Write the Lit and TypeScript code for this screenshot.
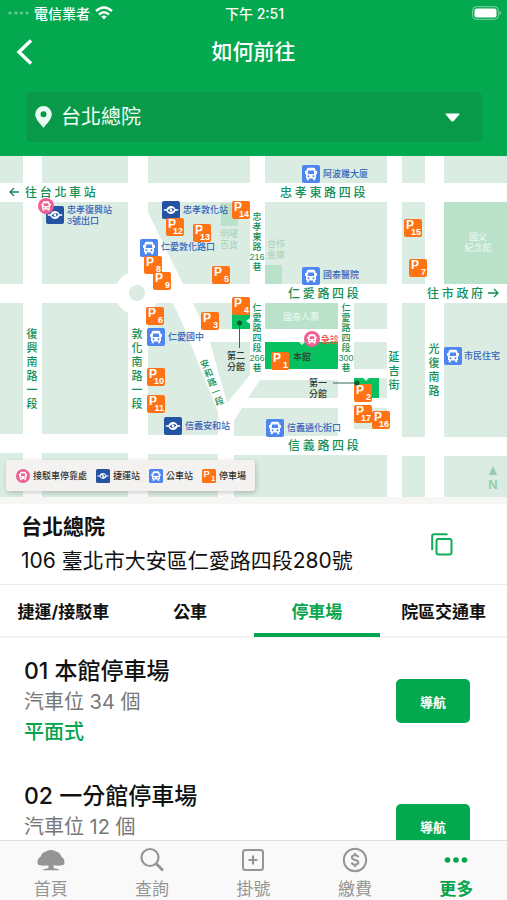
import { LitElement, html, svg, css, nothing } from "lit";
import { customElement, property, state } from "lit/decorators.js";
import { classMap } from "lit/directives/class-map.js";

type Pin = [label: string, x: number, y: number];
type Label = [text: string, x: number, y: number];
type Column = { x: number; y: number; step: number; size: string; parts: string[]; turn?: number };

/* ---------- map data, in map units ---------- */

const blocks: [number, number, number, number][] = [
  [0, 0, 23, 27], [42, 0, 86, 27], [148, 0, 102, 27], [265, 0, 122, 27], [402, 0, 23, 27], [444, 0, 63, 27],
  [0, 46, 23, 82], [42, 46, 86, 82], [265, 46, 122, 82], [402, 46, 23, 82],
  [0, 147, 23, 131], [42, 147, 86, 131], [354, 147, 33, 26], [354, 186, 33, 27], [354, 222, 33, 20],
  [354, 252, 33, 21], [402, 147, 23, 134], [444, 147, 63, 134],
  [0, 297, 23, 44], [42, 297, 86, 44], [148, 298, 70, 43], [234, 299, 153, 42], [402, 300, 23, 41], [444, 300, 63, 41],
];

const shapes = [
  "148,46 250,46 250,128 183,128 148,56",
  "148,147 173,147 183,169 218,256 218,279 148,279",
  "193,147 250,147 250,173 205,173",
  "210,186 250,186 250,219 227,247",
  "260,224 338,224 338,242 248,242",
  "242,252 338,252 338,280 234,280 234,265",
];

const landmarks: [number, number, number, number][] = [
  [221, 47, 17, 23], [265, 109, 17, 19], [265, 147, 73, 26], [444, 46, 63, 82],
];

const campus: [number, number, number, number][] = [
  [232, 157, 18, 16], [265, 186, 73, 27], [354, 222, 25, 20],
];

const parking: Pin[] = [
  ["14", 232, 45], ["12", 166, 62], ["13", 193, 68], ["8", 144, 100], ["9", 153, 116], ["5", 212, 110],
  ["4", 232, 141], ["6", 146, 151], ["3", 201, 156], ["15", 404, 63], ["7", 409, 103], ["10", 147, 212],
  ["11", 147, 239], ["1", 271, 196], ["2", 354, 228], ["17", 354, 249], ["16", 372, 255],
];

const metro: [number, number][] = [[46, 50], [162, 45], [164, 261]];
const buses: [number, number][] = [[140, 83], [302, 9], [302, 111], [147, 172], [444, 191], [266, 263]];
const shuttles: [number, number][] = [[38, 42], [304, 175]];

const stops: Label[] = [
  ["忠孝復興站", 67, 54], ["3號出口", 67, 65], ["忠孝敦化站", 183, 54], ["仁愛敦化路口", 161, 91],
  ["阿波羅大廈", 323, 18], ["國泰醫院", 323, 119], ["仁愛國中", 168, 181], ["信義安和站", 185, 270],
  ["市民住宅", 464, 200], ["信義通化街口", 287, 272],
];

const roads: Label[] = [
  ["往 台 北 車 站", 25, 35], ["忠 孝 東 路 四 段", 280, 35], ["仁 愛 路 四 段", 288, 136],
  ["往 市 政 府", 427, 136], ["信 義 路 四 段", 288, 288],
];

const columns: Column[] = [
  { x: 32, y: 178, step: 14, size: "avenue", parts: [..."復興南路一段"] },
  { x: 137, y: 178, step: 14, size: "avenue", parts: [..."敦化南路一段"] },
  { x: 394, y: 201, step: 14, size: "avenue", parts: [..."延吉街"] },
  { x: 434, y: 193, step: 14, size: "avenue", parts: [..."光復南路"] },
  { x: 257, y: 61, step: 10, size: "lane", parts: [..."忠孝東路", "216", "巷"] },
  { x: 257, y: 152, step: 10, size: "lane", parts: [..."仁愛路四段", "266", "巷"] },
  { x: 346, y: 152, step: 10, size: "lane", parts: [..."仁愛路四段", "300", "巷"] },
  { x: 205, y: 208, step: 10, size: "lane", parts: [..."安和路一段"], turn: -21 },
];

const faint: [string, number, number, string][] = [
  ["明曜", 229, 78, "sage"], ["百貨", 229, 89, "sage"], ["合作", 276, 88, "sage"], ["金庫", 276, 99, "sage"],
  ["國父", 478, 81, "pale"], ["紀念館", 478, 92, "pale"], ["國泰人壽", 301, 161, "pale"],
];

/* ---------- map symbols, each on an 18 unit square ---------- */

const busGlyph = svg`
  <path fill="#fff" d="M4.6 4.4Q4.800 3 6.400 2.800H11.600Q13.200 3 13.400 4.400L13.700 6H15V9H14V13H13.200V15.200H11.200V13.600H6.800V15.200H4.800V13H4V9H3V6H4.300Z"/>
  <path class="cut" d="M6.200 5.400H11.800L12.300 9H5.700Z"/>
  <circle class="cut" cx="6.500" cy="11.300" r="1"/><circle class="cut" cx="11.500" cy="11.300" r="1"/>`;

const symbols = {
  bus: svg`<g class="bus"><rect width="18" height="18" rx="2"/>${busGlyph}</g>`,
  metro: svg`<g class="metro"><rect width="18" height="18" rx="2"/>
    <path fill="#fff" d="M1.800 8.200H4.400Q6 5 9 5Q12 5 13.600 8.200H16.200V9.800H13.600Q12 13 9 13Q6 13 4.400 9.800H1.800Z"/>
    <path class="cut" d="M5.600 9.500Q7.500 6.800 11 7.200L12.400 8.500Q10.500 11.200 7 10.800Z"/><circle cx="9" cy="9" r="1.300" fill="#fff"/></g>`,
  shuttle: svg`<g class="shuttle"><circle cx="8" cy="8" r="8"/><g transform="translate(1 1) scale(.78)">${busGlyph}</g></g>`,
  parking: (n: string) => svg`<g class="parking"><rect width="18" height="18" rx="2"/>
    <text class="p" x="2" y="10">P</text>
    <text class="n" x="17" y="16" text-anchor="end">${n}</text></g>`,
};

const symbolStyles = css`
  .bus rect, .bus .cut { fill: #4d86ef; }
  .metro rect, .metro .cut { fill: #2453a3; }
  .shuttle > circle, .shuttle .cut { fill: #ee5f93; }
  .parking rect { fill: #ff7315; }
  .parking text { fill: #fff; font-family: "Liberation Sans", sans-serif; font-weight: 700; }
  .parking .p { font-size: 12px; }
  .parking .n { font-size: 9px; }
`;

@customElement("hospital-map")
class HospitalMap extends LitElement {
  static styles = [symbolStyles, css`
    :host { display: block; position: relative; background: #fefffe; }
    .map { display: block; width: 100%; height: auto; }
    text { dominant-baseline: central; font-family: "Liberation Sans", "Noto Sans CJK TC", sans-serif; }
    .parking text { dominant-baseline: auto; }
    .block { fill: #dbece2; }
    .landmark { fill: #bae2cb; }
    .campus { fill: #07c160; }
    .white { fill: #fefffe; }
    .road { font-family: "Noto Sans CJK TC", sans-serif; font-size: 12px; font-weight: 500; fill: #138f57; }
    .avenue { font-size: 11px; font-weight: 500; fill: #138f57; }
    .lane { font-size: 9px; font-weight: 500; fill: #138f57; }
    .column { text-anchor: middle; }
    .stop { font-size: 9px; font-weight: 500; fill: #3763bb; }
    .wing { font-size: 9px; font-weight: 500; fill: #2f3d36; }
    .urgent { font-size: 9px; font-weight: 500; fill: #ee4c3c; }
    .faint { font-size: 9px; text-anchor: middle; }
    .sage { fill: #a9d3ba; }
    .pale { fill: #eefaf2; }
    .arrow { fill: none; stroke: #138f57; stroke-width: 1.3; }
    .leader { stroke: #2c6e4c; stroke-width: 1; }
    .dot { fill: #0b5a31; }
    .entry { fill: #d5f5e2; }
    .north { fill: #93ceae; font-size: 13px; font-weight: 700; text-anchor: middle; }
    .legend {
      position: absolute; left: 6px; bottom: 6px;
      display: flex; align-items: center; gap: 9px;
      height: 31px; margin: 0; padding: 0 9px 0 10px; list-style: none;
      border-radius: 3px; background: #f4f2f1;
      box-shadow: 1px 2px 5px rgba(0, 0, 0, .2);
      font: 500 9px "Noto Sans CJK TC", sans-serif; color: #333;
    }
    .legend li { display: flex; align-items: center; gap: 3px; white-space: nowrap; }
    .key { width: 14px; height: 14px; }
  `];

  private rect(kind: string, [x, y, w, h]: [number, number, number, number]) {
    return svg`<rect class=${kind} x=${x} y=${y} width=${w} height=${h}/>`;
  }

  private place(symbol: unknown, x: number, y: number) {
    return svg`<g transform="translate(${x} ${y})">${symbol}</g>`;
  }

  private column(c: Column) {
    return svg`<g transform="translate(${c.x} ${c.y}) rotate(${c.turn ?? 0})">
      <text class="column ${c.size}">${c.parts.map(
        (part, i) => svg`<tspan x="0" y=${i * c.step}>${part}</tspan>`)}</text></g>`;
  }

  private key(symbol: unknown, name: string, box = "0 0 18 18") {
    return html`<li><svg class="key" viewBox=${box} aria-hidden="true">${symbol}</svg>${name}</li>`;
  }

  render() {
    return html`
      <svg class="map" viewBox="0 0 507 341" role="img" aria-label="台北總院">
        ${blocks.map((b) => this.rect("block", b))}
        ${shapes.map((points) => svg`<polygon class="block" points=${points}/>`)}
        <circle class="white" cx="137" cy="137" r="22"/>
        <circle class="block" cx="137" cy="137" r="8"/>
        ${landmarks.map((b) => this.rect("landmark", b))}
        ${campus.map((b) => this.rect("campus", b))}
        <path class="entry" d="M246 165L250 162V168ZM299 186H305L302 189ZM363 222H369L366 225Z"/>
        ${faint.map(([t, x, y, tone]) => svg`<text class="faint ${tone}" x=${x} y=${y}>${t}</text>`)}
        ${roads.map(([t, x, y]) => svg`<text class="road" x=${x} y=${y}>${t}</text>`)}
        <path class="arrow" d="M19 36H10M14 32L10 36L14 40M488 137H498M494 133L498 137L494 141"/>
        ${columns.map((c) => this.column(c))}
        ${stops.map(([t, x, y]) => svg`<text class="stop" x=${x} y=${y}>${t}</text>`)}
        ${metro.map(([x, y]) => this.place(symbols.metro, x, y))}
        ${buses.map(([x, y]) => this.place(symbols.bus, x, y))}
        ${parking.map(([n, x, y]) => this.place(symbols.parking(n), x, y))}
        ${shuttles.map(([x, y]) => this.place(symbols.shuttle, x, y))}
        <path class="leader" d="M239.500 167V192M333 227H357"/>
        <circle class="dot" cx="239.500" cy="167" r="2.500"/>
        <circle class="dot" cx="357" cy="227" r="2.500"/>
        <text class="wing" x="227" y="200">第二</text>
        <text class="wing" x="227" y="211">分館</text>
        <text class="wing" x="309" y="227">第一</text>
        <text class="wing" x="309" y="238">分館</text>
        <text class="wing" x="293" y="201">本館</text>
        <text class="urgent" x="321" y="184">急診</text>
        <path class="north" d="M493 310L497 319H489Z"/>
        <text class="north" x="493" y="328">N</text>
      </svg>
      <ul class="legend">
        ${this.key(symbols.shuttle, "接駁車停靠處", "0 0 16 16")}
        ${this.key(symbols.metro, "捷運站")}
        ${this.key(symbols.bus, "公車站")}
        ${this.key(symbols.parking("1"), "停車場")}
      </ul>`;
  }
}

/* ---------- bottom navigation ---------- */

const navIcons: Record<string, unknown> = {
  home: svg`<path fill="currentColor" d="M.8 17.300C-.2 13.500 1.500 11 3.800 9.600C4.300 6.500 6.800 4.800 9.500 4.200C12.300 2.700 15.700 2.700 18.500 4.200C21.200 4.800 23.700 6.500 24.200 9.600C26.500 11 28.200 13.500 27.200 17.300C26 18.800 22.500 18.900 16.300 18.600L16.800 21.300C19 21.400 21 21.900 22.500 23.200H5.500C7 21.900 9 21.400 11.200 21.300L11.700 18.600C5.500 18.900 2 18.800.8 17.300Z"/>`,
  search: svg`<g fill="none" stroke="currentColor" stroke-width="2.200"><circle cx="12" cy="10.500" r="8.500"/><path stroke-width="3" d="M18 16.500L25 23.500"/></g>`,
  register: svg`<g fill="none" stroke="currentColor" stroke-width="2"><rect x="4" y="3" width="20" height="20" rx="2.500"/><path stroke-width="2.200" d="M14 8.500V17.500M9.500 13H18.500"/></g>`,
  pay: svg`<g fill="none" stroke="currentColor" stroke-width="2"><circle cx="14" cy="13" r="11.200"/><path d="M17.300 10.300C17 8.900 15.700 8.300 14 8.300C12.200 8.300 10.900 9.100 10.900 10.600C10.900 13.900 17.300 11.900 17.300 15.300C17.300 16.900 15.900 17.700 14 17.700C12.200 17.700 10.900 16.900 10.700 15.500M14 6V8.500M14 17.500V20"/></g>`,
  more: svg`<g fill="currentColor"><circle cx="5.500" cy="13" r="2.800"/><circle cx="14" cy="13" r="2.800"/><circle cx="22.500" cy="13" r="2.800"/></g>`,
};

@customElement("bottom-nav")
class BottomNav extends LitElement {
  static styles = css`
    :host { display: block; background: #f9f9f9; border-top: 1px solid #dedede; }
    .bar { display: grid; grid-template-columns: repeat(5, 1fr); height: 59px; }
    .link {
      display: flex; flex-direction: column; align-items: center; gap: 4px; padding-top: 6px;
      color: #959595; text-decoration: none; font-size: 17px; line-height: 24px;
    }
    .link.on { color: #04a54d; font-weight: 700; }
    .icon { width: 28px; height: 26px; flex: none; }
  `;
  private items = [["home", "首頁"], ["search", "查詢"], ["register", "掛號"], ["pay", "繳費"], ["more", "更多"]];

  render() {
    return html`<nav class="bar">${this.items.map(([id, name]) => html`
      <a href="#${id}" class=${classMap({ link: true, on: id === "more" })}>
        <svg class="icon" viewBox="0 0 28 26" aria-hidden="true">${navIcons[id]}</svg>${name}</a>`)}</nav>`;
  }
}

/* ---------- one car park ---------- */

@customElement("parking-row")
class ParkingRow extends LitElement {
  @property() name = "";
  @property() spaces = "";
  @property() kind = "";

  static styles = css`
    :host { display: flex; justify-content: space-between; align-items: flex-start; min-height: 125px; padding: 0 37px 0 24px; box-sizing: border-box; }
    .name { margin: 0; font-size: 23px; line-height: 32px; font-weight: 500; color: #111; }
    .line { margin: 0; font-size: 20px; line-height: 30px; color: #777; }
    .kind { color: #04a54d; font-weight: 500; }
    .go {
      width: 74px; height: 44px; margin-top: 24px; padding: 0; border: 0; border-radius: 5px;
      background: #04a84e; color: #fff; font: inherit; font-size: 13px; font-weight: 700;
    }
  `;

  render() {
    return html`
      <div>
        <h2 class="name">${this.name}</h2>
        <p class="line">${this.spaces}</p>
        ${this.kind ? html`<p class="line kind">${this.kind}</p>` : nothing}
      </div>
      <button class="go" type="button">導航</button>`;
  }
}

/* ---------- page ---------- */

@customElement("app-root")
class AppRoot extends LitElement {
  @state() private tab = "停車場";

  static styles = css`
    :host {
      display: flex; flex-direction: column; height: 100vh; overflow: hidden;
      background: #fff; color: #111; font-family: Inter, "Noto Sans CJK TC", sans-serif;
    }
    .header { flex: none; padding-bottom: 14px; background: #04a84e; color: #fff; }
    .status {
      display: grid; grid-template-columns: 1fr auto 1fr; align-items: center;
      height: 26px; padding: 0 6px 0 8px; font-size: 14px; font-weight: 500;
    }
    .carrier { display: flex; align-items: center; gap: 5px; }
    .signal { width: 21px; height: 4px; }
    .wifi { width: 18px; height: 14px; }
    .battery { width: 29px; height: 14px; justify-self: end; }
    .nav { display: grid; grid-template-columns: 50px 1fr 50px; align-items: center; height: 52px; }
    .back { width: 50px; height: 44px; padding: 0 0 0 16px; border: 0; background: none; color: inherit; text-align: left; }
    .chevron { display: block; width: 17px; height: 26px; }
    .title { margin: 0; text-align: center; font-size: 21px; font-weight: 500; line-height: 32px; }
    .picker { display: grid; margin: 14px 25px 0 26px; align-items: center; }
    .select, .pin, .caret { grid-row: 1; grid-column: 1; }
    .select {
      width: 100%; height: 50px; padding: 0 48px 0 35px; border: 0; border-radius: 5px; appearance: none;
      background: #089949; color: #f1fff6; font: inherit; font-size: 20px;
    }
    .pin { width: 17px; height: 22px; margin-left: 9px; pointer-events: none; z-index: 1; }
    .caret { width: 15px; height: 9px; justify-self: end; margin-right: 22px; pointer-events: none; z-index: 1; }
    .content { flex: 1; min-height: 0; overflow: hidden; }
    .place {
      display: flex; align-items: center; justify-content: space-between;
      height: 80px; padding: 0 54px 0 21px; border-top: 7px solid #f6f6f4; border-bottom: 1px solid #ececea;
    }
    .site { margin: 0; font-size: 21px; line-height: 34px; font-weight: 700; }
    .address { margin: 0; font-size: 21px; line-height: 34px; }
    .copy { width: 22px; height: 23px; padding: 0; border: 0; background: none; }
    .copy svg { display: block; width: 22px; height: 23px; }
    .tabs { display: grid; grid-template-columns: repeat(4, 1fr); height: 51px; border-bottom: 2px solid #f4f4f2; }
    .tab {
      height: 52px; padding: 2px 0 0; border: 0; border-bottom: 4px solid transparent; background: none;
      color: #111; font: inherit; font-size: 17px; font-weight: 700; white-space: nowrap;
    }
    .tab.on { color: #04a54d; border-bottom-color: #04a54d; }
    .list { padding-top: 17px; }
  `;

  render() {
    return html`
      <header class="header">
        <div class="status">
          <span class="carrier">
            <svg class="signal" viewBox="0 0 21 4" fill="#fff" opacity=".4" aria-hidden="true"><circle cx="2" cy="2" r="1.600"/><circle cx="8" cy="2" r="1.600"/><circle cx="13.500" cy="2" r="1.600"/><circle cx="19" cy="2" r="1.600"/></svg>
            電信業者
            <svg class="wifi" viewBox="0 0 18 14" aria-hidden="true"><g fill="none" stroke="#fff" stroke-width="2.400"><path d="M1 5Q9-2.200 17 5"/><path d="M4 8.500Q9 4 14 8.500"/></g><path fill="#fff" d="M6.300 10.600Q9 8.400 11.700 10.600L9 13.500Z"/></svg>
          </span>
          <span>下午 2:51</span>
          <svg class="battery" viewBox="0 0 29 14" aria-hidden="true"><rect x=".7" y=".7" width="25.600" height="12.600" rx="3.500" fill="none" stroke="#fff" stroke-opacity=".5"/><rect x="2.500" y="2.500" width="22" height="9" rx="2" fill="#fff"/><path d="M27.500 5V9Q29 8.500 29 7T27.500 5" fill="#fff" opacity=".5"/></svg>
        </div>
        <div class="nav">
          <button class="back" type="button" aria-label="返回">
            <svg class="chevron" viewBox="0 0 17 26" fill="none" stroke="#fff" stroke-width="3.400" aria-hidden="true"><path d="M15 1.500L3 13L15 24.500"/></svg>
          </button>
          <h1 class="title">如何前往</h1>
        </div>
        <div class="picker">
          <select class="select" aria-label="院區"><option>台北總院</option></select>
          <svg class="pin" viewBox="0 0 17 22" aria-hidden="true"><path fill="#e9fbf0" fill-rule="evenodd" d="M8.500 0A8.300 8.300 0 0 1 16.800 8.300C16.800 13.500 11 18.500 8.500 22C6 18.500.2 13.500.2 8.300A8.300 8.300 0 0 1 8.500 0ZM8.500 5.300A3 3 0 1 0 8.500 11.300A3 3 0 1 0 8.500 5.300Z"/></svg>
          <svg class="caret" viewBox="0 0 15 9" aria-hidden="true"><path fill="#fff" d="M1 .5H14Q15 .7 14.300 1.600L8.600 8.200Q7.500 9 6.400 8.200L.7 1.600Q0 .7 1 .5Z"/></svg>
        </div>
      </header>
      <main class="content">
        <hospital-map></hospital-map>
        <section class="place">
          <div>
            <h2 class="site">台北總院</h2>
            <p class="address">106 臺北市大安區仁愛路四段280號</p>
          </div>
          <button class="copy" type="button" aria-label="複製地址">
            <svg viewBox="0 0 22 23" fill="none" stroke="#12ad58" stroke-width="2" aria-hidden="true"><rect x="5.500" y="6" width="15" height="15.500" rx="2"/><path d="M1.200 17V3Q1.200 1.200 3 1.200H16.500"/></svg>
          </button>
        </section>
        <div class="tabs" role="tablist">
          ${["捷運/接駁車", "公車", "停車場", "院區交通車"].map((name) => html`
            <button type="button" role="tab" aria-selected=${name === this.tab}
              class=${classMap({ tab: true, on: name === this.tab })}
              @click=${() => (this.tab = name)}>${name}</button>`)}
        </div>
        <div class="list">
          <parking-row name="01 本館停車場" spaces="汽車位 34 個" kind="平面式"></parking-row>
          <parking-row name="02 一分館停車場" spaces="汽車位 12 個"></parking-row>
        </div>
      </main>
      <bottom-nav></bottom-nav>`;
  }
}
